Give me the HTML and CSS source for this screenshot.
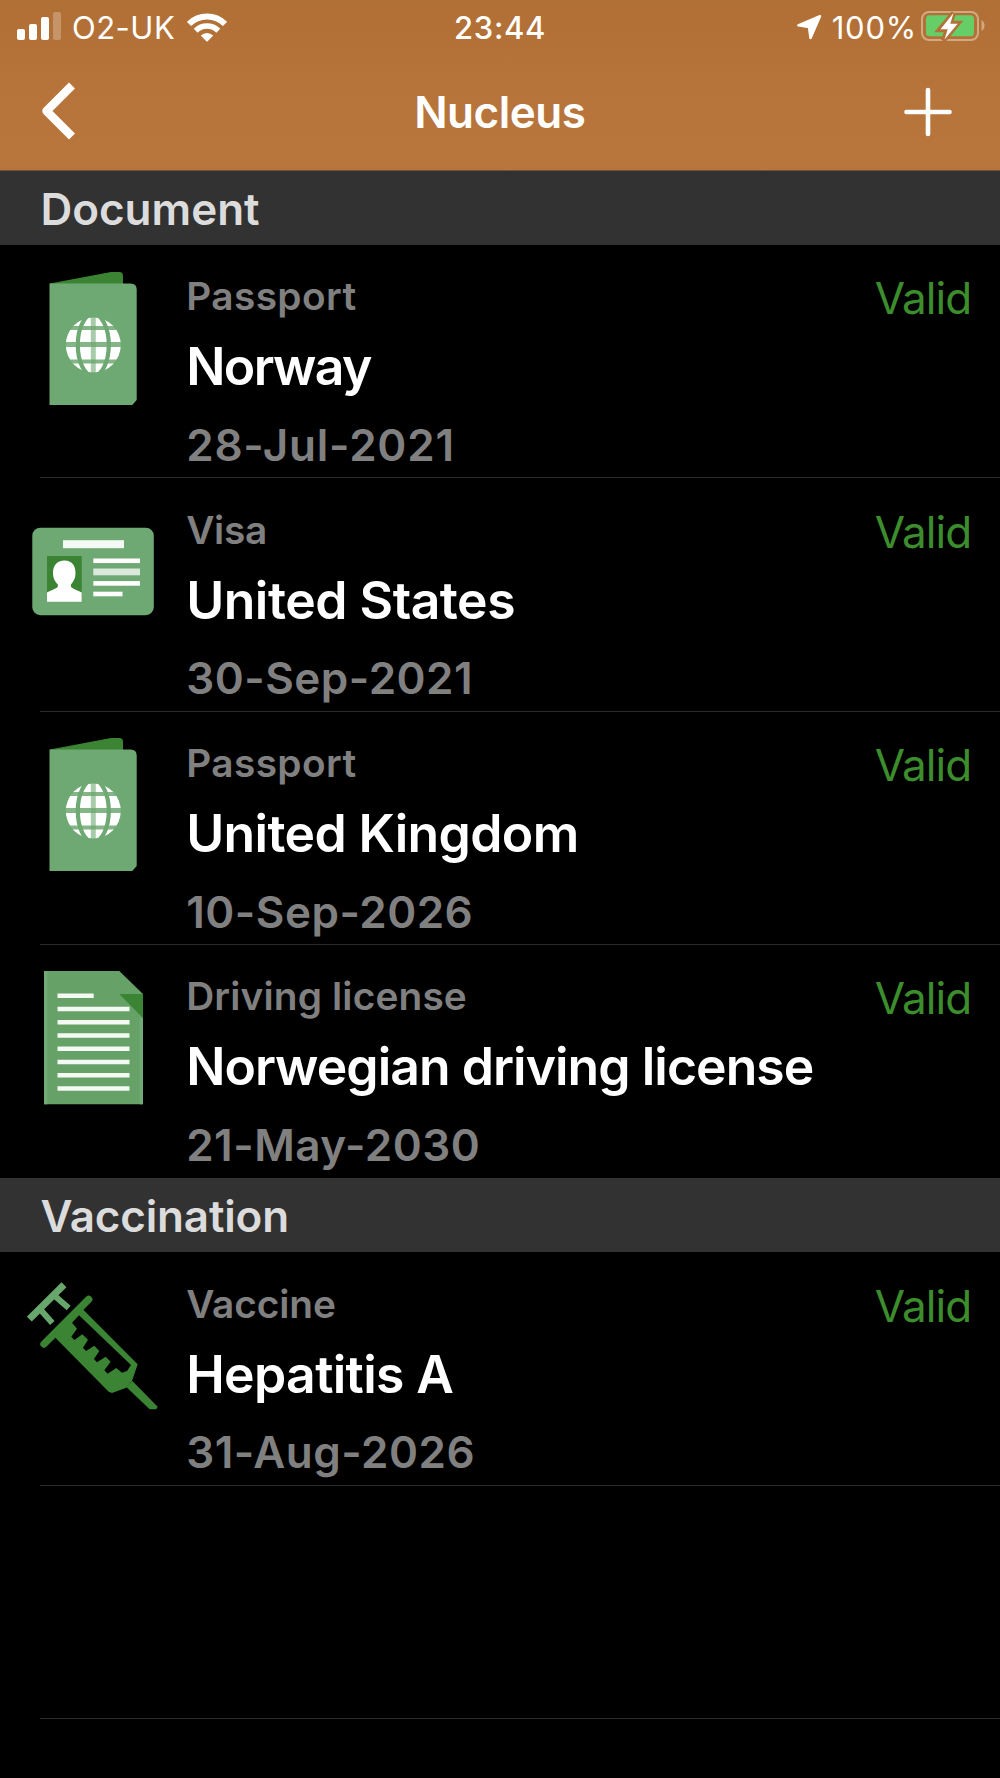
FILE: index.html
```
<!DOCTYPE html>
<html lang="en">
<head>
<meta charset="utf-8">
<title>Nucleus</title>
<link rel="stylesheet" href="styles.css">
</head>
<body>
<svg class="defs" width="0" height="0" aria-hidden="true">
  <symbol id="passport" viewBox="0 0 133.33 133.33">
    <path d="M23 11.5 84 0H92.500Q96 0 96 4V14H23Z" fill="#3a8433"/>
    <path d="M22.500 11.500H103.500Q109.700 11.500 109.700 17.500V128L105 133.330H22.500Z" fill="#6ea872"/>
    <circle cx="66.300" cy="73" r="27.500" fill="#fff"/>
    <g fill="none" stroke="#6ea872">
      <path d="M66.300 45V101" stroke-width="5" opacity=".6"/>
      <path d="M38 72.600H95" stroke-width="5" opacity=".85"/>
      <path d="M41 56H92M41 89.500H92" stroke-width="4" opacity=".85"/>
      <ellipse cx="66.300" cy="73" rx="15.500" ry="31" stroke-width="4.200"/>
    </g>
  </symbol>
</svg>

<header class="topbar">
  <div class="status">
    <div class="status-side">
      <svg class="signal" width="44" height="28" viewBox="0 0 44 28" fill="#fff">
        <rect x="0" y="17" width="8" height="11" rx="2"/>
        <rect x="12" y="12" width="8" height="16" rx="2"/>
        <rect x="24" y="5" width="8" height="23" rx="2"/>
        <rect x="36" y="0" width="8" height="28" rx="2" opacity=".25"/>
      </svg>
      <span class="carrier">O2-UK</span>
      <svg class="wifi" width="40" height="29" viewBox="0 0 40 29">
        <g fill="none" stroke="#fff" stroke-width="6">
          <path d="M2 11A25.500 25.500 0 0 1 38 11"/>
          <path d="M8.700 17.700A16 16 0 0 1 31.300 17.700" stroke-width="5.500"/>
        </g>
        <path d="M13.800 22.500A8.800 8.800 0 0 1 26.200 22.500L20.700 28.200Q20 28.800 19.300 28.200Z" fill="#fff"/>
      </svg>
    </div>
    <span class="clock">23:44</span>
    <div class="status-side status-right">
      <svg class="location" width="26" height="26" viewBox="0 0 26 26">
        <path d="M24 2.200 2.300 11.300 13 12.900 14.500 24Z" fill="#fff" stroke="#fff" stroke-width="2.500" stroke-linejoin="round"/>
      </svg>
      <span class="percent">100%</span>
      <svg class="battery" width="65" height="32" viewBox="0 0 65 32">
        <rect x="2" y="2" width="56" height="28" rx="7" fill="none" stroke="#d3a982" stroke-width="2"/>
        <path d="M61.500 10Q64.500 12 64.500 15.500T61.500 21Z" fill="#d3a982"/>
        <rect x="6" y="5.300" width="48" height="21" rx="3.500" fill="#67ce67"/>
        <path d="M33.500 3 19.500 19.800H27.200L23.500 30.500 38 13.300H30.300Z" fill="#b27138" stroke="#b27138" stroke-width="5"/>
        <path d="M33.500 3 20.500 19.300H27.700L24.500 29.500 37.700 13.800H30.300Z" fill="#fff"/>
      </svg>
    </div>
  </div>
  <nav class="nav">
    <svg class="back" width="40" height="60" viewBox="0 0 40 60">
      <path d="M34 4.500 8.500 30 34 55.500" fill="none" stroke="#fff" stroke-width="8.400" stroke-linejoin="round"/>
    </svg>
    <h1>Nucleus</h1>
    <svg class="add" width="48" height="50" viewBox="0 0 48 50">
      <path d="M24 3V47M2.500 25H45.500" fill="none" stroke="#fff" stroke-width="4.600" stroke-linecap="round"/>
    </svg>
  </nav>
</header>

<main>
  <h2>Document</h2>
  <article class="row norway">
    <svg class="icon"><use href="#passport"/></svg>
    <div class="info">
      <p class="kind">Passport</p>
      <p class="name">Norway</p>
      <p class="date">28-Jul-2021</p>
    </div>
    <span class="state">Valid</span>
  </article>
  <article class="row states">
    <svg class="icon" viewBox="0 0 133.33 133.33">
      <rect x="5.300" y="22.700" width="121.500" height="87.500" rx="8" fill="#6ea872"/>
      <rect x="20" y="51" width="34.700" height="45" fill="#3a8433"/>
      <g fill="#fff">
        <rect x="36" y="35.200" width="61" height="8" opacity=".93"/>
        <path d="M37.400 55.500C45 55.500 48.500 60.500 48.500 68 48.500 74 46 77 44 79.500 43 83.500 46 83 54.700 87.500V96.700H20V87.500C28.500 83 31.800 83.500 30.800 79.500 28.500 77 26 74 26 68 26 60.500 30 55.500 37.400 55.500Z"/>
        <rect x="66.300" y="53.500" width="46.700" height="4.600"/>
        <rect x="66.300" y="63.500" width="46.700" height="6.800" opacity=".75"/>
        <rect x="66.300" y="76.100" width="46.700" height="4.600"/>
        <rect x="66.300" y="86.700" width="29.200" height="4.600"/>
      </g>
    </svg>
    <div class="info">
      <p class="kind">Visa</p>
      <p class="name">United States</p>
      <p class="date">30-Sep-2021</p>
    </div>
    <span class="state">Valid</span>
  </article>
  <article class="row kingdom">
    <svg class="icon"><use href="#passport"/></svg>
    <div class="info">
      <p class="kind">Passport</p>
      <p class="name">United Kingdom</p>
      <p class="date">10-Sep-2026</p>
    </div>
    <span class="state">Valid</span>
  </article>
  <article class="row driving">
    <svg class="icon" viewBox="0 0 133.33 133.33">
      <path d="M17 0H92.300L116 23V133.330H17Z" fill="#66a167"/>
      <path d="M17 0H20.500V133.330H17ZM112.500 47H116V133.330H112.500Z" fill="#6fab73"/>
      <path d="M92.300 23H116V47Z" fill="#3a8433"/>
      <path d="M30.500 24.800H66.700M30.500 38H102.500M30.500 51.300H102.500M30.500 64.500H102.500M30.500 77.800H102.500M30.500 91H102.500M30.500 104.300H102.500M30.500 117.500H102.500" stroke="#f4f9f4" stroke-width="4.600"/>
    </svg>
    <div class="info">
      <p class="kind">Driving license</p>
      <p class="name">Norwegian driving license</p>
      <p class="date">21-May-2030</p>
    </div>
    <span class="state">Valid</span>
  </article>
  <h2 class="vaccination">Vaccination</h2>
  <article class="row hepatitis">
    <svg class="icon" viewBox="20 14 400 400">
      <g fill="none" stroke="#67a76c" stroke-width="21">
        <path d="M131 31 27 134"/>
        <path d="M100 62 145 101M58 103 96 146" stroke-width="18"/>
      </g>
      <path d="M205 75 71 209" stroke="#3a8433" stroke-width="22" stroke-linecap="round"/>
      <path fill="#3a8433" fill-rule="evenodd" d="M100 185 180 97 352 270 335 320 318 340 275 356 265 352ZM176 123 155 145 170 163 153 187 162 197 186 180 203 196 188 220 197 230 222 214 237 230 221 254 230 264 256 247 271 262 252 288 262 298 288 281 305 295 320 290 332 272Z"/>
      <path d="M318 338 336 320 412 397 408 405H388Z" fill="#3a8433"/>
    </svg>
    <div class="info">
      <p class="kind">Vaccine</p>
      <p class="name">Hepatitis A</p>
      <p class="date">31-Aug-2026</p>
    </div>
    <span class="state">Valid</span>
  </article>
  <div class="row"></div>
</main>
</body>
</html>
```
FILE: styles.css
```
* { box-sizing: border-box; }

body {
  margin: 0;
  min-height: 1778px;
  background: #000;
  color: #fff;
  font-family: Inter, "Liberation Sans", sans-serif;
}

h1, h2, p { margin: 0; }
svg { display: block; flex: none; }
.defs { position: absolute; }

/* Status bar and navigation */
.topbar {
  height: 171px;
  background: linear-gradient(#b06f35, #b7743a 50%, #b9763c);
  border-bottom: 1px solid #6b5340;
}

.status {
  display: flex;
  align-items: center;
  height: 54px;
  padding: 0 15px 0 17px;
  font-size: 31px;
  line-height: 55px;
}

.status-side {
  display: flex;
  align-items: center;
  flex: 1;
}
.status-right { justify-content: flex-end; }
.signal { margin-top: -2px; }
.carrier { margin-left: 11px; letter-spacing: .5px; }
.wifi { margin-left: 12px; }
.clock { margin-left: -2px; font-weight: 550; letter-spacing: .7px; }
.location { margin-right: 10px; }
.percent { letter-spacing: .8px; margin-right: 3px; }
.battery { margin-top: -3px; }

.nav {
  display: grid;
  grid-template-columns: 1fr auto 1fr;
  align-items: center;
  height: 116px;
  padding: 0 48px 0 38px;
}
.nav h1 {
  margin-left: 9.500px;
  font-size: 44px;
  font-weight: 600;
  line-height: 60px;
  letter-spacing: -.5px;
}
.back { margin-top: -3px; }
.add { justify-self: end; }

/* List */
h2 {
  height: 74px;
  padding-left: 40.400px;
  background: #323232;
  color: #dcdcdc;
  font-size: 44px;
  font-weight: 600;
  line-height: 76px;
}
.vaccination { letter-spacing: -.18px; }

.row {
  display: flex;
  height: 233.330px;
  margin-left: 40px;
  padding-right: 28.700px;
  border-bottom: 1px solid #2b2b2d;
}
.driving { border-bottom: 0; }

.icon {
  width: 133.330px;
  height: 133.330px;
  margin: 26.500px 26.200px 0 -13.330px;
}

.info { flex: 1; padding-top: 31.400px; white-space: nowrap; }

.kind {
  color: #808080;
  font-size: 38.800px;
  font-weight: 560;
  line-height: 40px;
  letter-spacing: .4px;
}
.name {
  margin-top: 19.900px;
  font-size: 51.700px;
  font-weight: 600;
  line-height: 60px;
}
.date {
  margin-top: 23.700px;
  color: #808080;
  font-size: 44px;
  font-weight: 570;
  line-height: 50px;
  letter-spacing: .5px;
}
.state {
  padding-top: 28.200px;
  color: #3c8d2c;
  font-size: 44px;
  line-height: 50px;
  letter-spacing: -.9px;
}

.norway .name { letter-spacing: -1.600px; }
.norway .date { letter-spacing: .8px; }
.states .kind { letter-spacing: -.3px; }
.states .name { letter-spacing: -.49px; }
.kingdom .name { letter-spacing: -.64px; }
.driving .kind { letter-spacing: .15px; }
.driving .name { letter-spacing: -.95px; }
.hepatitis .kind { letter-spacing: -.1px; }
.hepatitis .name { letter-spacing: -.65px; }
```
